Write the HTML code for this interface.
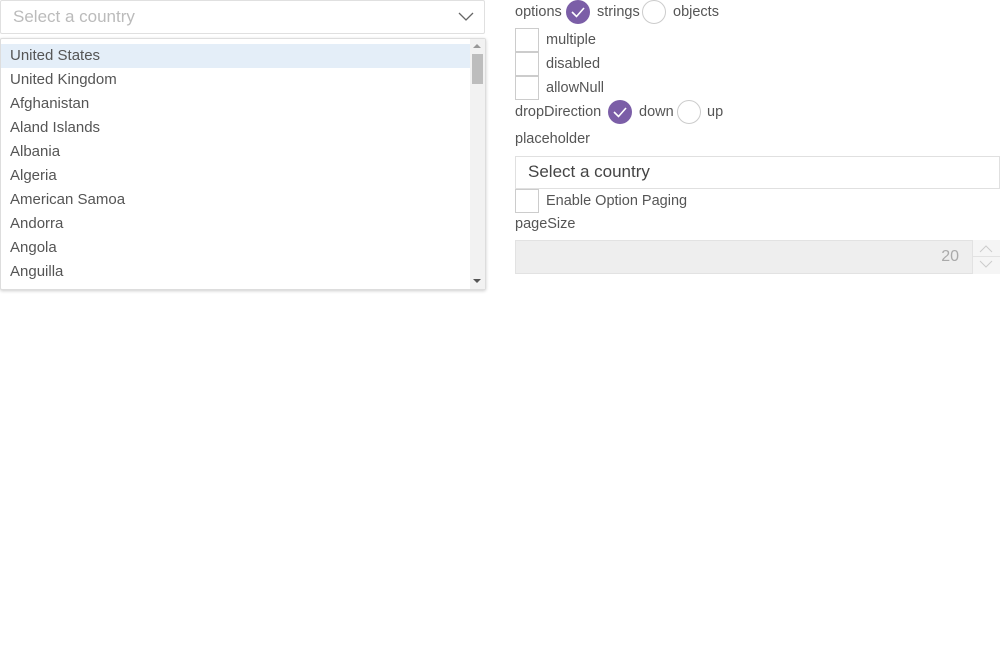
<!DOCTYPE html>
<html><head><style>
*{box-sizing:border-box;margin:0;padding:0}
body{width:1000px;height:660px;background:#fff;font-family:"Liberation Sans",sans-serif;font-size:14px;color:#555;position:relative;overflow:hidden}
.a{position:absolute}
.sel{left:0;top:0;width:485px;height:34px;border:1px solid #e0e0e0;border-radius:2px;color:#bbb;font-size:17px;padding:6px 12px}
.list{left:0;top:38px;width:486px;height:252px;border:1px solid #ddd;box-shadow:0 1px 3px rgba(0,0,0,.2);border-radius:2px;background:#fff}
.it{height:24px;line-height:24px;padding-left:9px;font-size:15px;color:#555}
.hl{background:#e4eef8}
.cb{width:24px;height:24px;border:1px solid #ccc}
.rad{width:24px;height:24px;border-radius:50%;border:1px solid #ccc;background:#fff}
.rchk{width:24px;height:24px;border-radius:50%;background:#7b5ea7}
.t{line-height:24px;font-size:14.5px;color:#555}
</style></head><body>
<div class="a sel">Select a country</div>
<svg class="a" style="left:458px;top:10px" width="16" height="12"><path d="M1 3 L8 10 L15 3" fill="none" stroke="#666" stroke-width="1.3"/></svg>
<div class="a list">
<div style="height:5px"></div>
<div class="it hl" style="margin-right:15px">United States</div>
<div class="it">United Kingdom</div>
<div class="it">Afghanistan</div>
<div class="it">Aland Islands</div>
<div class="it">Albania</div>
<div class="it">Algeria</div>
<div class="it">American Samoa</div>
<div class="it">Andorra</div>
<div class="it">Angola</div>
<div class="it">Anguilla</div>
</div>
<div class="a" style="left:470px;top:39px;width:15px;height:250px;background:#f2f2f2"></div>
<div class="a" style="left:472px;top:54px;width:11px;height:30px;background:#bdbdbd"></div>
<svg class="a" style="left:473px;top:43px" width="8" height="6"><path d="M0 5L4 1L8 5z" fill="#999"/></svg>
<svg class="a" style="left:473px;top:278px" width="8" height="6"><path d="M0 1L4 5L8 1z" fill="#555"/></svg>

<div class="a t" style="left:515px;top:0">options</div>
<div class="a rchk" style="left:566px;top:0"></div>
<svg class="a" style="left:566px;top:0" width="24" height="24"><path d="M6 12 L10.5 16.5 L18 8" fill="none" stroke="#fff" stroke-width="1.6"/></svg>
<div class="a t" style="left:597px;top:0">strings</div>
<div class="a rad" style="left:642px;top:0"></div>
<div class="a t" style="left:673px;top:0">objects</div>

<div class="a cb" style="left:515px;top:28px"></div><div class="a t" style="left:546px;top:28px">multiple</div>
<div class="a cb" style="left:515px;top:52px"></div><div class="a t" style="left:546px;top:52px">disabled</div>
<div class="a cb" style="left:515px;top:76px"></div><div class="a t" style="left:546px;top:76px">allowNull</div>

<div class="a t" style="left:515px;top:100px">dropDirection</div>
<div class="a rchk" style="left:608px;top:100px"></div>
<svg class="a" style="left:608px;top:100px" width="24" height="24"><path d="M6 12 L10.5 16.5 L18 8" fill="none" stroke="#fff" stroke-width="1.6"/></svg>
<div class="a t" style="left:639px;top:100px">down</div>
<div class="a rad" style="left:677px;top:100px"></div>
<div class="a t" style="left:707px;top:100px">up</div>

<div class="a t" style="left:515px;top:127px">placeholder</div>
<div class="a" style="left:515px;top:156px;width:485px;height:33px;border:1px solid #e0e0e0;padding:5px 12px;font-size:17px;color:#444">Select a country</div>
<div class="a cb" style="left:515px;top:189px"></div><div class="a t" style="left:546px;top:189px">Enable Option Paging</div>
<div class="a t" style="left:515px;top:212px">pageSize</div>
<div class="a" style="left:515px;top:240px;width:485px;height:34px;border:1px solid #e2e2e2;background:#eee;padding:7px 40px 0 0;text-align:right;font-size:16px;color:#aaa">20</div>
<div class="a" style="left:972px;top:240px;width:28px;height:34px;border-left:1px solid #e2e2e2;background:#f5f5f5"></div>
<div class="a" style="left:972px;top:256px;width:28px;height:1px;background:#e2e2e2"></div>
<svg class="a" style="left:979px;top:245px" width="14" height="8"><path d="M1 7L7 1L13 7" fill="none" stroke="#ccc"/></svg>
<svg class="a" style="left:979px;top:260px" width="14" height="8"><path d="M1 1L7 7L13 1" fill="none" stroke="#ccc"/></svg>
</body></html>
